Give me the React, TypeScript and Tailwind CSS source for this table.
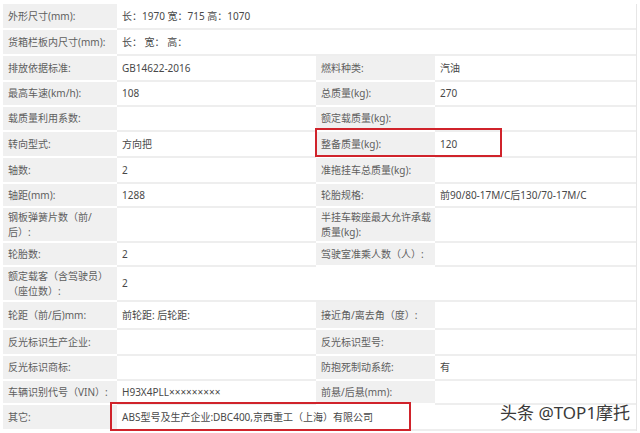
type Cell = { label: string; value?: string };
type Row = { h: number; left: Cell; right?: Cell; wide?: boolean };

const rows: Row[] = [
  { h: 26, left: { label: '外形尺寸(mm):', value: '长：1970 宽：715 高：1070' }, wide: true },
  { h: 26, left: { label: '货箱栏板内尺寸(mm):', value: '长：  宽：  高：' }, wide: true },
  { h: 26, left: { label: '排放依据标准:', value: 'GB14622-2016' }, right: { label: '燃料种类:', value: '汽油' } },
  { h: 25, left: { label: '最高车速(km/h):', value: '108' }, right: { label: '总质量(kg):', value: '270' } },
  { h: 25, left: { label: '载质量利用系数:' }, right: { label: '额定载质量(kg):' } },
  { h: 26, left: { label: '转向型式:', value: '方向把' }, right: { label: '整备质量(kg):', value: '120' } },
  { h: 26, left: { label: '轴数:', value: '2' }, right: { label: '准拖挂车总质量(kg):' } },
  { h: 24, left: { label: '轴距(mm):', value: '1288' }, right: { label: '轮胎规格:', value: '前90/80-17M/C后130/70-17M/C' } },
  { h: 35, left: { label: '钢板弹簧片数（前/后）:' }, right: { label: '半挂车鞍座最大允许承载质量(kg):' } },
  { h: 24, left: { label: '轮胎数:', value: '2' }, right: { label: '驾驶室准乘人数（人）:' } },
  { h: 35, left: { label: '额定载客（含驾驶员）（座位数）:', value: '2' }, wide: true },
  { h: 28, left: { label: '轮距（前/后)mm:', value: '前轮距: 后轮距:' }, right: { label: '接近角/离去角（度）:' } },
  { h: 26, left: { label: '反光标识生产企业:' }, right: { label: '反光标识型号:' } },
  { h: 25, left: { label: '反光标识商标:' }, right: { label: '防抱死制动系统:', value: '有' } },
  { h: 24, left: { label: '车辆识别代号（VIN）:', value: 'H93X4PLL×××××××××' }, right: { label: '前悬/后悬(mm):' } },
  { h: 26, left: { label: '其它:', value: 'ABS型号及生产企业:DBC400,京西重工（上海）有限公司' }, wide: true },
];

function Label({ text, w }: { text: string; w: string }) {
  return (
    <div
      className={`${w} flex shrink-0 items-center border-b-2 border-white bg-[#f0f0f0] pl-[5px] pr-1 leading-[15px] text-[#5e5e5e]`}
    >
      {text}
    </div>
  );
}

function Value({ text, w }: { text?: string; w: string }) {
  return (
    <div
      className={`${w} flex shrink-0 items-center border-b-2 border-[#eeeeee] bg-white pl-[5px] text-[#484848]`}
    >
      {text ?? ''}
    </div>
  );
}

export default function App() {
  return (
    <div
      className="relative h-[433px] w-[640px] overflow-hidden bg-white pl-[3px] pt-[4px] text-[10px]"
      style={{ fontFamily: '"Noto Sans", "Noto Sans CJK SC", sans-serif' }}
    >
      <div className="w-[634px] border-r border-[#e6e6e6]">
        {rows.map((r, i) => (
          <div key={i} className="flex" style={{ height: r.h }}>
            <Label text={r.left.label} w="w-[114px]" />
            {r.wide ? (
              <Value text={r.left.value} w="w-[519px]" />
            ) : (
              <>
                <Value text={r.left.value} w="w-[199px]" />
                <Label text={r.right?.label ?? ''} w="w-[119px]" />
                <Value text={r.right?.value} w="w-[201px]" />
              </>
            )}
          </div>
        ))}
      </div>

      {/* highlight boxes */}
      <div className="absolute left-[315px] top-[128px] h-[29px] w-[187px] border-[2.5px] border-[#d0232b]" />
      <div className="absolute left-[110px] top-[402px] h-[29px] w-[301px] border-[2.5px] border-[#d0232b]" />

      {/* watermark */}
      <div
        className="absolute left-[500px] top-[401px] whitespace-nowrap text-[17px] leading-[24px] text-[#3a3a3a]"
        style={{ textShadow: '0 0 2px #fff, 0 0 2px #fff' }}
      >
        头条 @TOP1摩托
      </div>
    </div>
  );
}
